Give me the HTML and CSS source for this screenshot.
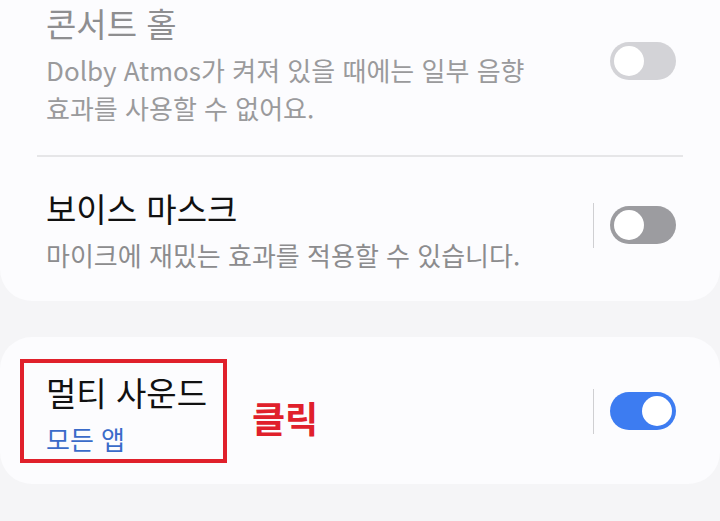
FILE: index.html
```html
<!DOCTYPE html>
<html lang="ko">
<head>
    <meta charset="UTF-8">
    <meta name="viewport" content="width=device-width, initial-scale=1.0">
    <title>소리 품질 및 효과</title>
    <link rel="stylesheet" href="styles.css">
</head>
<body>
    <div class="card card-top">
        <div class="row">
            <div class="text disabled">
                <div class="title">콘서트 홀</div>
                <div class="desc">Dolby Atmos가 켜져 있을 때에는 일부 음향<br>효과를 사용할 수 없어요.</div>
            </div>
            <div class="switch-wrap">
                <span class="switch off-disabled"><span class="knob"></span></span>
            </div>
        </div>

        <div class="divider"></div>

        <div class="row row-voice">
            <div class="text">
                <div class="title">보이스 마스크</div>
                <div class="desc">마이크에 재밌는 효과를 적용할 수 있습니다.</div>
            </div>
            <div class="switch-wrap">
                <span class="sep"></span>
                <span class="switch off"><span class="knob"></span></span>
            </div>
        </div>
    </div>

    <div class="card card-multi">
        <div class="row">
            <div class="text highlight">
                <div class="title">멀티 사운드</div>
                <div class="sub">모든 앱</div>
            </div>
            <div class="click-label">클릭</div>
            <div class="switch-wrap">
                <span class="sep"></span>
                <span class="switch on"><span class="knob"></span></span>
            </div>
        </div>
    </div>
</body>
</html>
```

FILE: styles.css
```css
body {
    margin: 0;
    background: #f5f5f7;
    font-family: "Noto Sans CJK KR", "Noto Sans", sans-serif;
    overflow: hidden;
}

.card {
    background: #fcfcfe;
    border-radius: 32px;
    padding: 0 44px 0 46px;
}

.card-top {
    margin-top: -40px;
    padding-top: 43px;
    padding-bottom: 27px;
}

.card-multi {
    margin-top: 36px;
    padding-top: 35px;
    padding-bottom: 26px;
}

.row {
    display: flex;
    align-items: center;
}

.text {
    flex: 1;
}

.title {
    font-size: 33px;
    line-height: 40px;
    color: #111;
}

.desc {
    margin-top: 8px;
    font-size: 26px;
    line-height: 38px;
    color: #8c8c8e;
}

.sub {
    margin-top: 8px;
    font-size: 26px;
    line-height: 38px;
    color: #3a6bc9;
}

.disabled .title { color: #8e8e90; }
.disabled .desc { color: #9a9a9c; }

.divider {
    height: 2px;
    background: #e6e6e8;
    margin: 28px -7px 31px -9px;
}

.switch-wrap {
    display: flex;
    align-items: center;
    gap: 16px;
    margin-bottom: 8px;
}

.row-voice .switch-wrap { margin-bottom: 12px; }

.sep {
    width: 1px;
    height: 45px;
    background: #cfcfd2;
}

.switch {
    position: relative;
    width: 66px;
    height: 38px;
    border-radius: 19px;
    display: block;
}

.switch .knob {
    position: absolute;
    top: 4px;
    left: 4px;
    width: 30px;
    height: 30px;
    border-radius: 50%;
    background: #fff;
}

.switch.on .knob {
    left: auto;
    right: 4px;
}

.off-disabled { background: #d3d3d7; }
.off { background: #9c9ca0; }
.on { background: #3d7cf1; }

/* annotation */
.highlight {
    flex: 0 0 180px;
    position: relative;
}

.highlight::after {
    content: "";
    position: absolute;
    top: -13px;
    left: -26px;
    width: 199px;
    height: 96px;
    border: 4px solid #e0202b;
}

.click-label {
    flex: 1;
    margin-left: 26px;
    font-size: 36px;
    font-weight: bold;
    color: #e0202b;
    line-height: 40px;
    margin-top: 4px;
}
```
